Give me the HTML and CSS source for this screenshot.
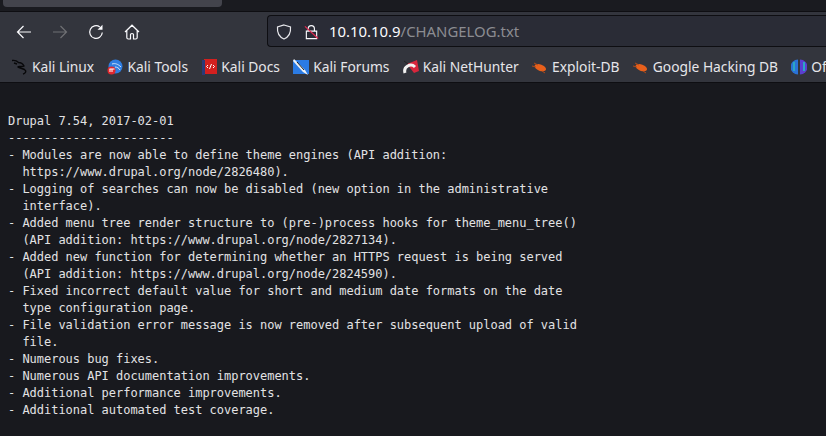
FILE: index.html
```html
<!DOCTYPE html>
<html lang="en">
<head>
<meta charset="utf-8">
<title>CHANGELOG.txt</title>
<link rel="stylesheet" href="styles.css">
</head>
<body>
<div class="tabstrip"><div class="tab"></div></div>
<div class="toolbar">
  <div class="nav">
    <svg class="navicon" viewBox="0 0 16 16"><path d="M15 8H1.500M7.500 2 1.500 8l6 6" fill="none" stroke="#fbfbfe" stroke-width="1.200"/></svg>
    <svg class="navicon dim" viewBox="0 0 16 16"><path d="M1 8h13.500M8.500 2l6 6-6 6" fill="none" stroke="#6f7074" stroke-width="1.200"/></svg>
    <svg class="navicon" viewBox="0 0 16 16"><path d="M14.300 8.500A6.300 6.300 0 1 1 11.800 3" fill="none" stroke="#fbfbfe" stroke-width="1.200"/><path d="M14.500 .8v5h-5z" fill="#fbfbfe"/></svg>
    <svg class="navicon" viewBox="0 0 16 16"><path d="M1 8 8 1.200 15 8M2.800 6.500V13.500Q2.800 15 4.300 15H6.500V10.500Q6.500 9.500 8 9.500T9.500 10.500V15H11.700Q13.200 15 13.200 13.500V6.500" fill="none" stroke="#fbfbfe" stroke-width="1.200"/></svg>
  </div>
  <div class="urlbar">
    <svg class="shield" viewBox="0 0 16 16"><path d="M8 1 14.500 3C15 8.500 12.500 13 8 15 3.500 13 1 8.500 1.500 3z" fill="none" stroke="#e8e8ec" stroke-width="1.200"/></svg>
    <svg class="lock" viewBox="0 0 16 16"><path d="M4.500 7V4.500a3.300 3.300 0 0 1 6.600 0V7M2.500 7H13.500V15H2.500z" fill="none" stroke="#fbfbfe" stroke-width="1.200"/><path d="M1 2 15 15" stroke="#e22850" stroke-width="1.300"/></svg>
    <span class="host">10.10.10.9</span><span class="path">/CHANGELOG.txt</span>
  </div>
</div>
<div class="bookmarks">
  <a class="bm"><svg class="fav" viewBox="0 0 16 16"><path d="M0 1.500C3 1 5 2 6.500 3.500 9 3.500 11 5 12 7 10 8.500 7 6.500 6 8c1.500 1.500 6 1 7.500 3.500.7 1.500-.5 3-2.500 3.500M2 4 5 5" fill="none" stroke="#08080a" stroke-width="1.400"/></svg>Kali Linux</a>
  <a class="bm"><svg class="fav" viewBox="0 0 16 16"><circle cx="8.500" cy="7.500" r="7" fill="#2f7de1"/><path d="M5 5c3-1 6 0 9 3M8 8c2 0 4 1 5 3" fill="none" stroke="#cfe3fa"/><circle cx="4.500" cy="11.500" r="4" fill="#e0282e"/><path d="M3 10v3M5 10v3M2.500 10h5" stroke="#fff"/></svg>Kali Tools</a>
  <a class="bm"><svg class="fav" viewBox="0 0 16 16"><path d="M3 0h13v15H3z" fill="#d3201f"/><path d="M1 1h3v15H1z" fill="#2b3a78"/><path d="M7 6 5.500 7.500 7 9M12 6l1.500 1.500L12 9M10.500 5l-2 5" fill="none" stroke="#fff"/></svg>Kali Docs</a>
  <a class="bm"><svg class="fav" viewBox="0 0 16 16"><path d="M0 1h16v14H0z" fill="#2b7be4"/><path d="M1 0 12 11l3 5-5-3L0 2z" fill="#eef2f6"/><path d="M4 3l7 8" stroke="#222"/></svg>Kali Forums</a>
  <a class="bm"><svg class="fav" viewBox="0 0 16 16"><path d="M4 5 14 1 16 12 11 14z" fill="#d8263c"/><path d="M2 14A6 6 0 0 1 12 8" fill="none" stroke="#f2f2f2" stroke-width="3"/><path d="M1 2 5 5" stroke="#222"/></svg>Kali NetHunter</a>
  <a class="bm"><svg class="fav" viewBox="0 0 16 16"><ellipse cx="8.500" cy="8.500" rx="6" ry="3.200" fill="#e8601c" transform="rotate(20 8 8)"/><path d="M0 7 4 8M2 4 6 6M10 12l3 2" stroke="#b04a1a"/></svg>Exploit-DB</a>
  <a class="bm"><svg class="fav" viewBox="0 0 16 16"><ellipse cx="8.500" cy="8.500" rx="6" ry="3.200" fill="#e8601c" transform="rotate(20 8 8)"/><path d="M0 7 4 8M2 4 6 6M10 12l3 2" stroke="#b04a1a"/></svg>Google Hacking DB</a>
  <a class="bm"><svg class="fav" viewBox="0 0 16 16"><path d="M7 0.500A7.500 7.500 0 0 0 7 15.500z" fill="#2a72d6"/><path d="M9 0.500A7.500 7.500 0 0 1 9 15.500z" fill="#5a3fd0"/><path d="M3 3v9M13 3v9" stroke="#2ba6c4" stroke-width="2"/></svg>OffSec</a>
</div>
<pre class="log">Drupal 7.54, 2017-02-01
-----------------------
- Modules are now able to define theme engines (API addition:
  https://www.drupal.org/node/2826480).
- Logging of searches can now be disabled (new option in the administrative
  interface).
- Added menu tree render structure to (pre-)process hooks for theme_menu_tree()
  (API addition: https://www.drupal.org/node/2827134).
- Added new function for determining whether an HTTPS request is being served
  (API addition: https://www.drupal.org/node/2824590).
- Fixed incorrect default value for short and medium date formats on the date
  type configuration page.
- File validation error message is now removed after subsequent upload of valid
  file.
- Numerous bug fixes.
- Numerous API documentation improvements.
- Additional performance improvements.
- Additional automated test coverage.</pre>
</body>
</html>
```
FILE: styles.css
```css
html, body {
  margin: 0;
  height: 100%;
  overflow: hidden;
  background: #18191e;
}
.tabstrip {
  height: 11px;
  background: #1a1b20;
  padding-left: 3px;
}
.tab {
  width: 219px;
  height: 7px;
  background: #43444c;
  border-radius: 0 0 4px 4px;
}
.toolbar {
  height: 40px;
  background: #33353d;
  border-top: 1px solid #0e0e12;
  display: flex;
  align-items: center;
}
.nav {
  display: flex;
  align-items: center;
  flex: none;
  width: 267px;
  padding-left: 16px;
  box-sizing: border-box;
  gap: 20px;
}
.navicon {
  width: 16px;
  height: 16px;
  flex: none;
}
.urlbar {
  flex: 1;
  height: 29px;
  padding: 1px 0 0 8px;
  margin-top: -2px;
  background: #2a2c36;
  border: 1px solid #0e0e12;
  border-right: 0;
  border-radius: 4px 0 0 4px;
  display: flex;
  align-items: center;
  font: 14.9px/1 "Noto Sans", sans-serif;
}
.shield {
  width: 16px;
  height: 16px;
  margin-right: 12px;
  flex: none;
}
.lock {
  width: 15px;
  height: 16px;
  margin-right: 10px;
  flex: none;
}
.host { color: #fbfbfe; }
.path { color: #8c8c92; }
.bookmarks {
  height: 30px;
  background: #33353d;
  border-bottom: 1px solid #0e0e12;
  display: flex;
  align-items: center;
  padding-left: 12px;
  gap: 13.3px;
  overflow: hidden;
  white-space: nowrap;
  font: 13.8px/1 "Noto Sans", sans-serif;
  color: #e6e6ea;
}
.bm {
  display: flex;
  align-items: center;
  gap: 4px;
  flex: none;
}
.fav {
  width: 16px;
  height: 16px;
  flex: none;
}
.log {
  margin: 0;
  padding: 30px 0 0 8px;
  font: 12px/17px "DejaVu Sans Mono", monospace;
  letter-spacing: -0.024px;
  color: #e2e2e4;
}
```
